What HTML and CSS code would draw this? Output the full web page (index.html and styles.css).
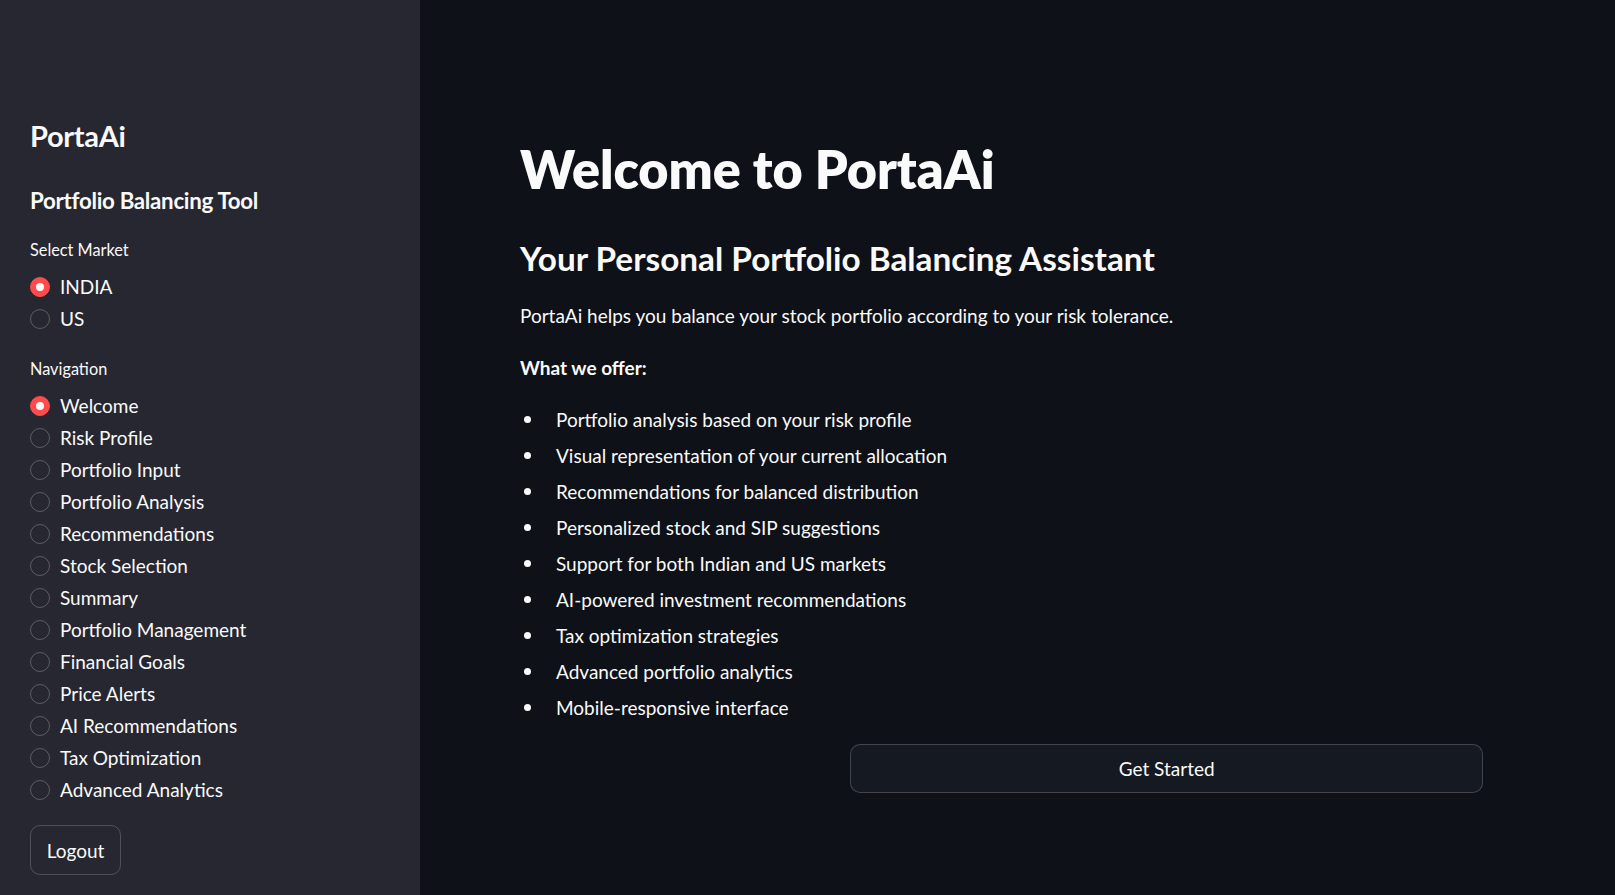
FILE: index.html
```html
<!DOCTYPE html>
<html lang="en">
<head>
<meta charset="utf-8">
<title>PortaAi</title>
<link rel="stylesheet" href="styles.css">
</head>
<body>
<div class="app">
  <aside class="sidebar">
    <h1 class="side-title">PortaAi</h1>
    <h3 class="side-sub">Portfolio Balancing Tool</h3>

    <div class="radio-group">
      <div class="group-label">Select Market</div>
      <div class="radio checked"><span class="circle"></span><span class="rlabel">INDIA</span></div>
      <div class="radio"><span class="circle"></span><span class="rlabel">US</span></div>
    </div>

    <div class="radio-group">
      <div class="group-label">Navigation</div>
      <div class="radio checked"><span class="circle"></span><span class="rlabel">Welcome</span></div>
      <div class="radio"><span class="circle"></span><span class="rlabel">Risk Profile</span></div>
      <div class="radio"><span class="circle"></span><span class="rlabel">Portfolio Input</span></div>
      <div class="radio"><span class="circle"></span><span class="rlabel">Portfolio Analysis</span></div>
      <div class="radio"><span class="circle"></span><span class="rlabel">Recommendations</span></div>
      <div class="radio"><span class="circle"></span><span class="rlabel">Stock Selection</span></div>
      <div class="radio"><span class="circle"></span><span class="rlabel">Summary</span></div>
      <div class="radio"><span class="circle"></span><span class="rlabel">Portfolio Management</span></div>
      <div class="radio"><span class="circle"></span><span class="rlabel">Financial Goals</span></div>
      <div class="radio"><span class="circle"></span><span class="rlabel">Price Alerts</span></div>
      <div class="radio"><span class="circle"></span><span class="rlabel">AI Recommendations</span></div>
      <div class="radio"><span class="circle"></span><span class="rlabel">Tax Optimization</span></div>
      <div class="radio"><span class="circle"></span><span class="rlabel">Advanced Analytics</span></div>
    </div>

    <button class="btn logout">Logout</button>
  </aside>

  <main class="main">
    <div class="block">
      <h1 class="title">Welcome to PortaAi</h1>
      <h3 class="subtitle">Your Personal Portfolio Balancing Assistant</h3>
      <p class="para">PortaAi helps you balance your stock portfolio according to your risk tolerance.</p>
      <p class="para offer"><strong>What we offer:</strong></p>
      <ul class="features">
        <li>Portfolio analysis based on your risk profile</li>
        <li>Visual representation of your current allocation</li>
        <li>Recommendations for balanced distribution</li>
        <li>Personalized stock and SIP suggestions</li>
        <li>Support for both Indian and US markets</li>
        <li>AI-powered investment recommendations</li>
        <li>Tax optimization strategies</li>
        <li>Advanced portfolio analytics</li>
        <li>Mobile-responsive interface</li>
      </ul>
      <div class="cols">
        <div class="col"></div>
        <div class="col"><button class="btn wide">Get Started</button></div>
      </div>
    </div>
  </main>
</div>
</body>
</html>
```

FILE: styles.css
```css
* { box-sizing: border-box; }

html, body {
  margin: 0;
  padding: 0;
  height: 100%;
}

body {
  font-family: "Lato", "Noto Sans", sans-serif;
  color: #fafafa;
  background: #0e1117;
  overflow: hidden;
}

.app {
  display: flex;
  height: 895px;
}

.sidebar {
  width: 420px;
  flex: 0 0 420px;
  background: #262730;
  padding: 116px 30px 0 30px;
  display: flex;
  flex-direction: column;
  align-items: flex-start;
}

.side-title {
  margin: 0;
  font-size: 29px;
  font-weight: 700;
  line-height: 40px;
  letter-spacing: -0.3px;
}

.side-sub {
  margin: 30px 0 0 0;
  font-size: 22.3px;
  font-weight: 700;
  line-height: 30px;
  letter-spacing: -0.3px;
}

.radio-group {
  margin-top: 23px;
  display: flex;
  flex-direction: column;
}

.group-label {
  font-size: 16.3px;
  line-height: 22px;
  margin-bottom: 10px;
}

.radio {
  display: flex;
  align-items: center;
  height: 32px;
  gap: 10px;
}

.circle {
  width: 20px;
  height: 20px;
  border-radius: 50%;
  border: 1px solid rgba(250, 250, 250, 0.25);
  flex: 0 0 20px;
  display: flex;
  align-items: center;
  justify-content: center;
}

.radio.checked .circle {
  background: #ff4b4b;
  border-color: #ff4b4b;
}

.radio.checked .circle::after {
  content: "";
  width: 8px;
  height: 8px;
  border-radius: 50%;
  background: #fafafa;
}

.rlabel {
  font-size: 19px;
  line-height: 24px;
}

.btn {
  font-family: inherit;
  color: #fafafa;
  font-size: 19px;
  border: 1px solid rgba(250, 250, 250, 0.2);
  border-radius: 10px;
  cursor: pointer;
}

.logout {
  margin-top: 19px;
  width: 91px;
  height: 50px;
  background: transparent;
  padding: 0 15px;
}

.main {
  flex: 1;
  padding: 0 0 0 100px;
}

.block {
  width: 963px;
  padding-top: 137px;
}

.title {
  margin: 0;
  font-size: 52px;
  line-height: 64px;
  font-weight: 800;
}

.subtitle {
  margin: 35px 0 0 0;
  font-size: 33.3px;
  line-height: 44px;
  font-weight: 700;
}

.para {
  margin: 21px 0 0 0;
  font-size: 19px;
  line-height: 30px;
}

.offer {
  margin-top: 22px;
}

.offer strong {
  font-weight: 700;
}

.features {
  list-style: none;
  margin: 18px 0 0 0;
  padding: 0;
}

.features li {
  display: flex;
  align-items: center;
  height: 36px;
  font-size: 19px;
}

.features li::before {
  content: "";
  width: 7px;
  height: 7px;
  border-radius: 50%;
  background: #fafafa;
  margin-left: 4px;
  margin-right: 25px;
  flex: 0 0 7px;
}

.cols {
  display: grid;
  grid-template-columns: 1fr 2fr;
  gap: 14px;
  margin-top: 19px;
}

.wide {
  width: 100%;
  height: 49px;
  background: #151921;
}
```
